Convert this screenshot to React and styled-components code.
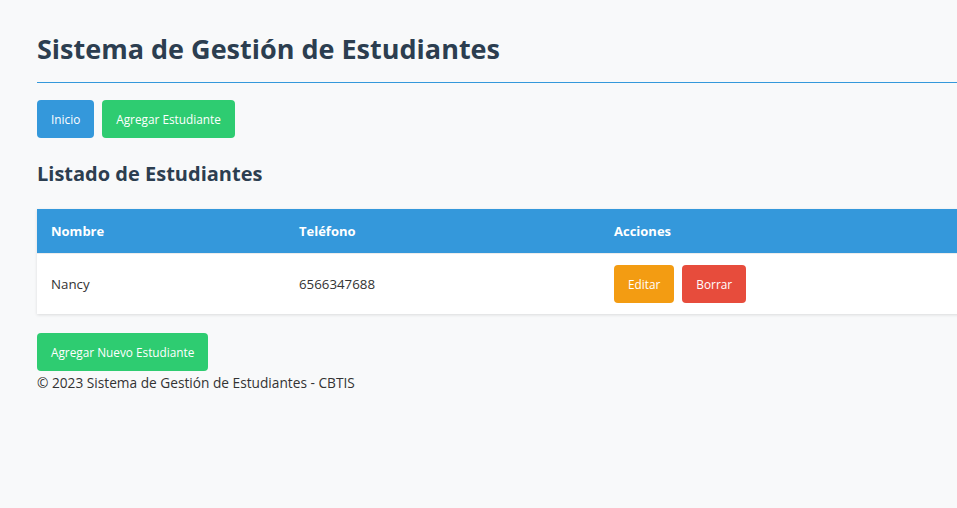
import React from "react";
import styled, { createGlobalStyle } from "styled-components";

const GlobalStyle = createGlobalStyle`
  html, body {
    margin: 0;
    padding: 0;
    overflow: hidden;
    background-color: #f8f9fa;
  }
  body {
    font-family: "Open Sans", "Noto Sans", sans-serif;
    color: #333;
  }
`;

const Container = styled.div`
  width: 1100px;
  padding: 20px 37px;
`;

const Header = styled.header`
  border-bottom: 1px solid #3498db;
  padding-bottom: 14px;
  margin-bottom: 17px;
`;

const Title = styled.h1`
  margin: 0;
  padding-top: 10px;
  font-size: 27px;
  line-height: 38px;
  font-weight: 700;
  color: #2c3e50;
`;

const Nav = styled.nav`
  display: flex;
  gap: 8px;
`;

const colors = {
  blue: "#3498db",
  green: "#2ecc71",
  orange: "#f39c12",
  red: "#e74c3c",
};

const Button = styled.button`
  height: 38px;
  padding: 0 14px;
  border: none;
  border-radius: 4px;
  background-color: ${(p) => colors[p.$color]};
  color: #fff;
  font-family: inherit;
  font-size: 11.8px;
  cursor: pointer;
`;

const SectionTitle = styled.h2`
  margin: 23px 0 22px;
  font-size: 20px;
  line-height: 26px;
  font-weight: 700;
  color: #2c3e50;
`;

const Table = styled.table`
  width: 100%;
  border-collapse: collapse;
  background-color: #fff;
  box-shadow: 0 1px 3px rgba(0, 0, 0, 0.12);
  table-layout: fixed;
`;

const Th = styled.th`
  background-color: #3498db;
  color: #fff;
  text-align: left;
  font-size: 13px;
  font-weight: 700;
  height: 44px;
  padding: 0 14px;
  box-sizing: border-box;
`;

const Td = styled.td`
  font-size: 13.3px;
  color: #333;
  height: 61px;
  padding: 1px 14px 0;
  box-sizing: border-box;
  border-top: 1px solid #ececec;
`;

const Actions = styled.div`
  display: flex;
  gap: 8px;
`;

const Footer = styled.footer`
  margin-top: 19px;
`;

const FooterText = styled.p`
  margin: 2px 0 0;
  font-size: 13.7px;
  color: #333;
`;

const App = () => {
  const students = [{ id: 1, nombre: "Nancy", telefono: "6566347688" }];

  return (
    <>
      <GlobalStyle />
      <Container>
        <Header>
          <Title>Sistema de Gestión de Estudiantes</Title>
        </Header>
        <Nav>
          <Button $color="blue">Inicio</Button>
          <Button $color="green">Agregar Estudiante</Button>
        </Nav>
        <SectionTitle>Listado de Estudiantes</SectionTitle>
        <Table>
          <colgroup>
            <col style={{ width: "248px" }} />
            <col style={{ width: "315px" }} />
            <col />
          </colgroup>
          <thead>
            <tr>
              <Th>Nombre</Th>
              <Th>Teléfono</Th>
              <Th>Acciones</Th>
            </tr>
          </thead>
          <tbody>
            {students.map((s) => (
              <tr key={s.id}>
                <Td>{s.nombre}</Td>
                <Td>{s.telefono}</Td>
                <Td>
                  <Actions>
                    <Button $color="orange">Editar</Button>
                    <Button $color="red">Borrar</Button>
                  </Actions>
                </Td>
              </tr>
            ))}
          </tbody>
        </Table>
        <Footer>
          <Button $color="green">Agregar Nuevo Estudiante</Button>
          <FooterText>© 2023 Sistema de Gestión de Estudiantes - CBTIS</FooterText>
        </Footer>
      </Container>
    </>
  );
};

export default App;
